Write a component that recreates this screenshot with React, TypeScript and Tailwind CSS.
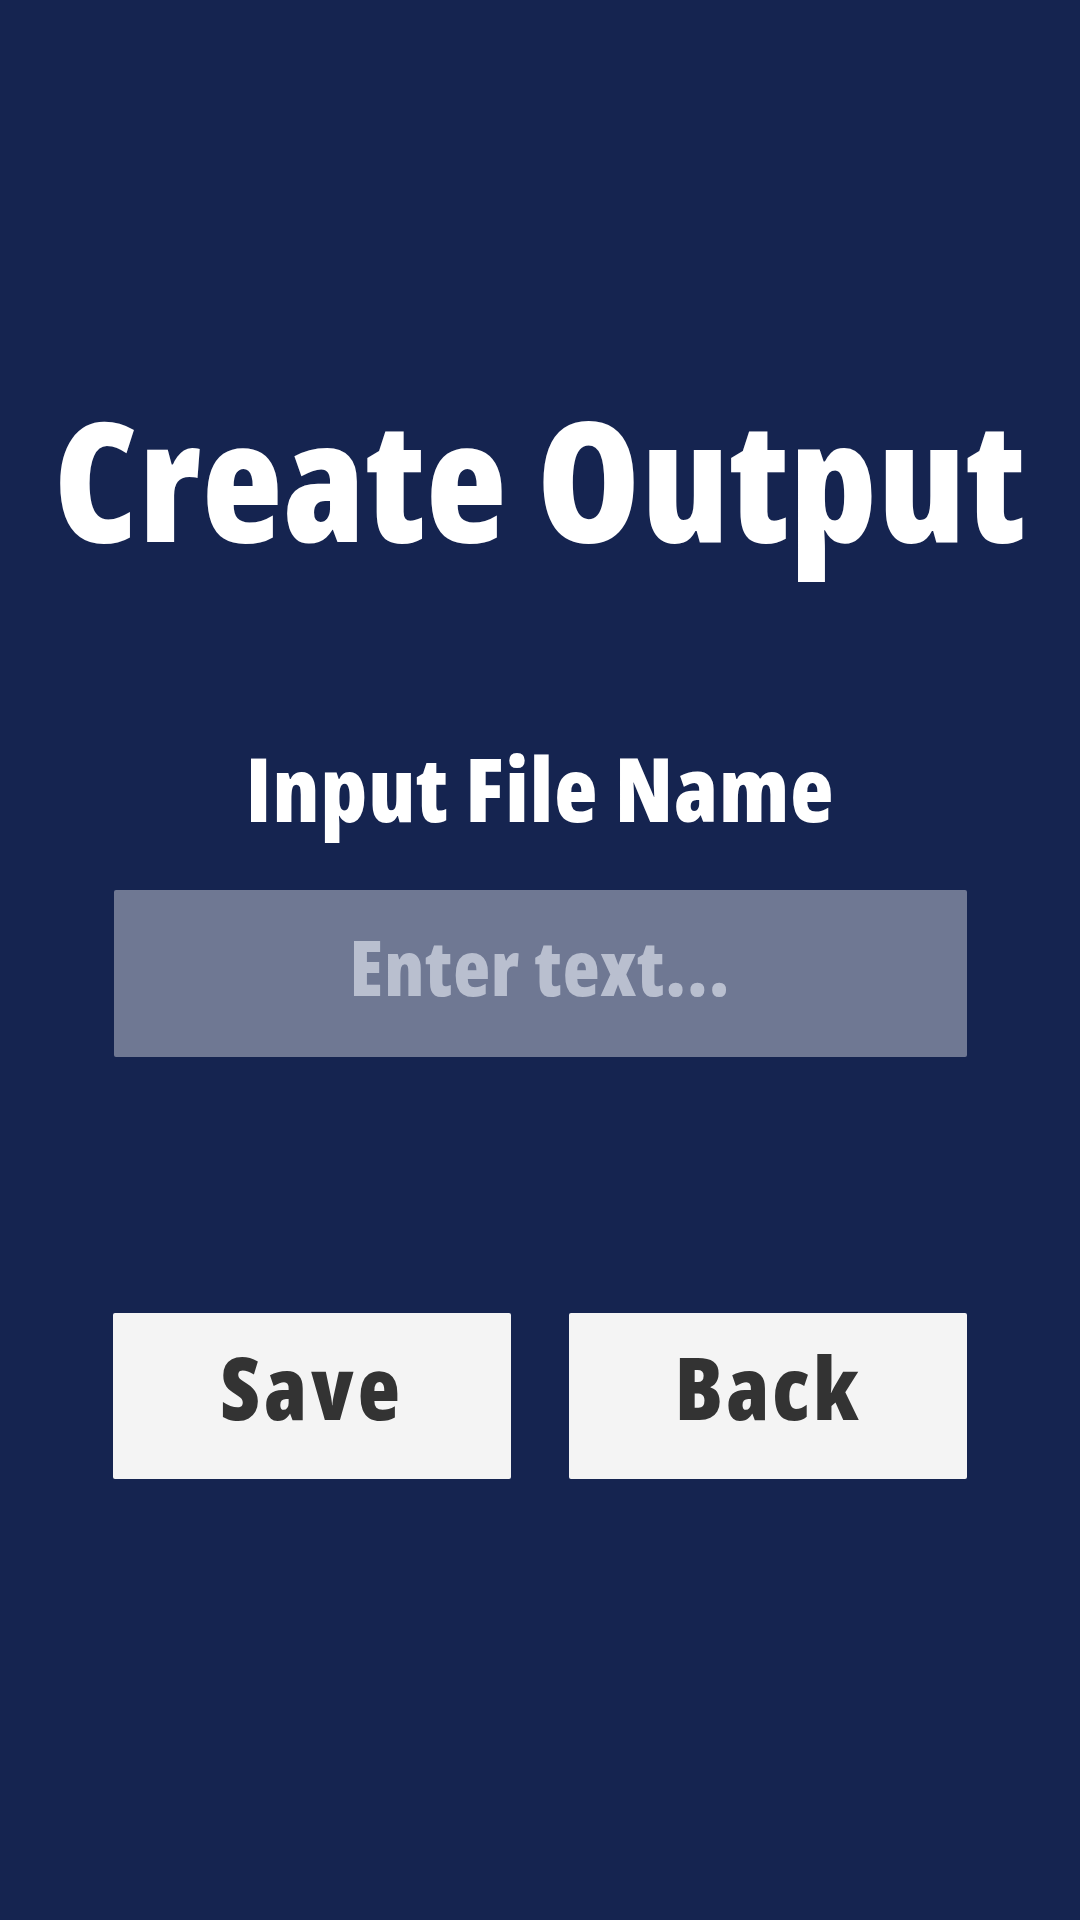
import { useState } from "react";

export default function App() {
  const [name, setName] = useState("");

  return (
    <div className="min-h-[1920px] bg-[#152450] flex flex-col items-center font-['Open_Sans',sans-serif] font-extrabold font-stretch-condensed">
      <h1 className="mt-[395px] whitespace-nowrap text-[166px] leading-none text-white tracking-[1px]">
        Create Output
      </h1>

      <label className="mt-[182px] whitespace-nowrap text-[89px] leading-none text-white tracking-[1px]">
        Input File Name
      </label>

      <input
        className="mt-[58px] w-[853px] h-[167px] pb-[15px] rounded-[2px] bg-[#6f7893] text-center text-[76px] leading-none text-white placeholder:text-[#b9bfcf] outline-none tracking-[1px] font-stretch-condensed"
        type="text"
        value={name}
        onChange={(e) => setName(e.target.value)}
        placeholder="Enter text..."
      />

      <div className="mt-[256px] w-[854px] grid grid-cols-2 gap-[58px]">
        <button className="h-[166px] pb-[19px] rounded-[2px] bg-[#f4f4f4] text-[#333333] text-[87px] leading-none tracking-[4px]">
          Save
        </button>
        <button className="h-[166px] pb-[19px] rounded-[2px] bg-[#f4f4f4] text-[#333333] text-[87px] leading-none tracking-[3px]">
          Back
        </button>
      </div>
    </div>
  );
}
